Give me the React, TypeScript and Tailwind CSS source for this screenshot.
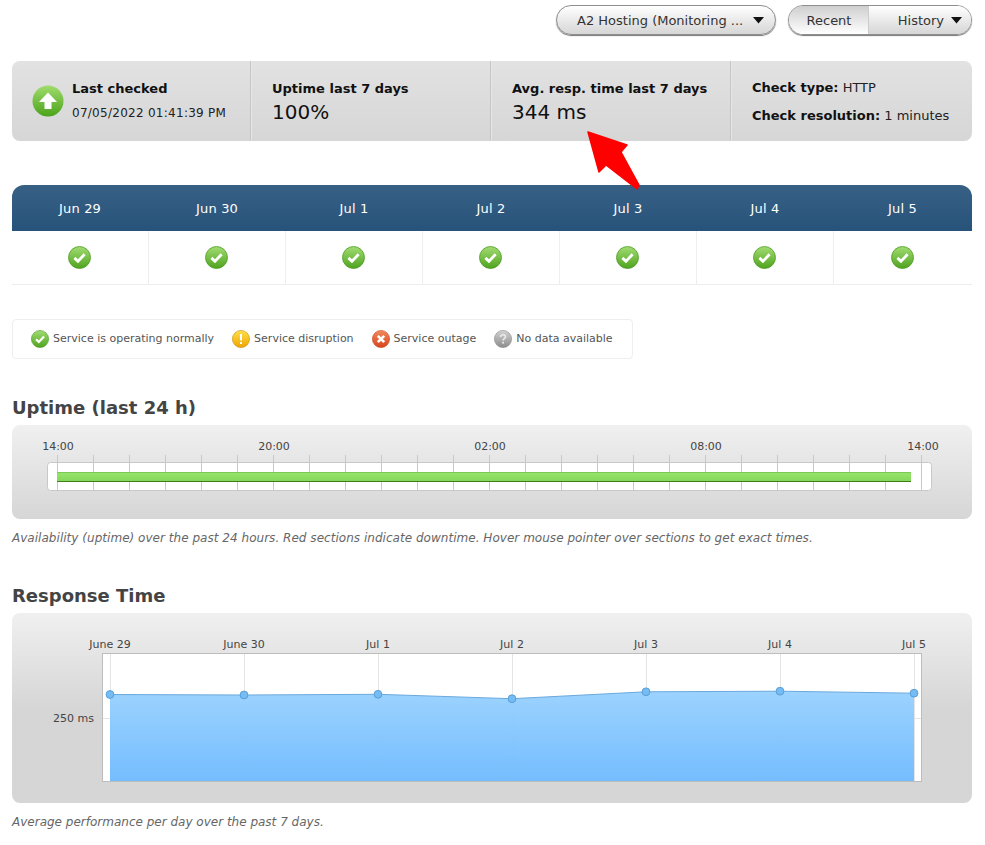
import React from "react";

type Status = "ok" | "warn" | "down" | "none";

const days = ["Jun 29", "Jun 30", "Jul 1", "Jul 2", "Jul 3", "Jul 4", "Jul 5"];

const colors: Record<Status, [string, string, string]> = {
  ok: ["#a2dc72", "#4fa31f", "#4b9a22"],
  warn: ["#ffe04a", "#eda500", "#c98d0a"],
  down: ["#f28a5c", "#d8431c", "#c2451f"],
  none: ["#d2d2d2", "#8c8c8c", "#8a8a8a"],
};

const StatusIcon = ({ kind, size }: { kind: Status; size: number }) => {
  const [top, bottom, edge] = colors[kind];
  const id = "grad-" + kind + size;
  return (
    <svg width={size} height={size} viewBox="0 0 18 18" className="shrink-0">
      <defs>
        <linearGradient id={id} x1="0" y1="0" x2="0" y2="1">
          <stop offset="0" stopColor={top} />
          <stop offset="1" stopColor={bottom} />
        </linearGradient>
      </defs>
      <circle cx="9" cy="9" r="8.6" fill={"url(#" + id + ")"} stroke={edge} strokeWidth="0.6" />
      {kind === "ok" && (
        <path d="M5 9.3l2.8 2.6L13 6.5" fill="none" stroke="#fff" strokeWidth="2.2" />
      )}
      {kind === "warn" && (
        <>
          <rect x="8" y="4" width="2" height="6.5" fill="#fff" />
          <rect x="8" y="12" width="2" height="2" fill="#fff" />
        </>
      )}
      {kind === "down" && (
        <path d="M5.8 5.8l6.4 6.4M12.2 5.8l-6.4 6.4" fill="none" stroke="#fff" strokeWidth="2.6" />
      )}
      {kind === "none" && (
        <>
          <path d="M6.6 7c0-3 4.9-3 4.9-.2 0 1.8-2.4 1.9-2.4 3.7" fill="none" stroke="#e8e8e8" strokeWidth="1.7" />
          <rect x="8.2" y="11.8" width="1.8" height="1.8" fill="#e8e8e8" />
        </>
      )}
    </svg>
  );
};

const UpIcon = () => (
  <svg width="32" height="32" viewBox="0 0 32 32" className="shrink-0">
    <defs>
      <linearGradient id="up-grad" x1="0" y1="0" x2="0" y2="1">
        <stop offset="0" stopColor="#a0dc6c" />
        <stop offset="1" stopColor="#4ba31a" />
      </linearGradient>
    </defs>
    <circle cx="16" cy="16" r="15.5" fill="url(#up-grad)" />
    <path d="M16 7.5L25 17h-5.5v7h-7v-7H7z" fill="#fff" />
  </svg>
);

const Caret = () => (
  <svg width="11" height="7" viewBox="0 0 11 7" className="shrink-0">
    <path d="M0 0h11L5.5 6.5z" fill="#111" />
  </svg>
);

const Stat = ({ label, value }: { label: string; value: string }) => (
  <div className="w-[240px] pl-[21px] pt-[19px] border-r border-[#c6c6c6] shadow-[1px_0_0_#e6e6e6]">
    <div className="text-[13px] font-bold leading-[18px] text-[#111]">{label}</div>
    <div className="text-[20px] leading-[29px] text-[#111]">{value}</div>
  </div>
);

const UptimeChart = () => {
  const ticks = Array.from({ length: 25 }, (_, i) => 45 + i * 36);
  const labels = [
    { x: 46, t: "14:00" },
    { x: 262, t: "20:00" },
    { x: 478, t: "02:00" },
    { x: 694, t: "08:00" },
    { x: 911, t: "14:00" },
  ];
  return (
    <svg width="960" height="94" className="block">
      <defs>
        <linearGradient id="bar-grad" x1="0" y1="0" x2="0" y2="1">
          <stop offset="0" stopColor="#97e56c" />
          <stop offset="1" stopColor="#82d659" />
        </linearGradient>
      </defs>
      {labels.map((l, i) => (
        <text key={i} x={l.x} y="25" textAnchor="middle" fontSize="11" fill="#444">
          {l.t}
        </text>
      ))}
      <rect x="35.5" y="37.5" width="884" height="28" rx="3" fill="#fff" stroke="#c8c8c8" />
      {ticks.map((x) => (
        <line key={x} x1={x + 0.5} x2={x + 0.5} y1="30" y2="65" stroke="#c8c8c8" />
      ))}
      <rect x="45" y="47" width="854" height="10" fill="url(#bar-grad)" />
      <rect x="45" y="47" width="854" height="1" fill="#7cc95a" />
      <rect x="45" y="56" width="854" height="1" fill="#3f7f17" />
    </svg>
  );
};

const ResponseChart = () => {
  const xs = [98, 232, 366, 500, 634, 768, 902];
  const ys = [81.5, 82, 81.3, 85.7, 78.8, 78.2, 80.2];
  const labels = ["June 29", "June 30", "Jul 1", "Jul 2", "Jul 3", "Jul 4", "Jul 5"];
  const line = xs.map((x, i) => x + "," + ys[i]).join(" ");
  return (
    <svg width="960" height="190" className="block">
      <defs>
        <linearGradient id="area-grad" x1="0" y1="0" x2="0" y2="1">
          <stop offset="0" stopColor="#99d1fe" />
          <stop offset="1" stopColor="#70bbfe" />
        </linearGradient>
      </defs>
      {labels.map((l, i) => (
        <text key={l} x={xs[i]} y="35" textAnchor="middle" fontSize="11" fill="#444">
          {l}
        </text>
      ))}
      <text x="82" y="109" textAnchor="end" fontSize="11" fill="#444">
        250 ms
      </text>
      <rect x="90.5" y="40.5" width="819" height="128" fill="#fff" stroke="#bdbdbd" />
      {xs.map((x) => (
        <line key={x} x1={x + 0.5} x2={x + 0.5} y1="41" y2="168" stroke="#e4e4e4" />
      ))}
      <line x1="91" x2="909" y1="105.5" y2="105.5" stroke="#e4e4e4" />
      <polygon points={"98,168 " + line + " 902,168"} fill="url(#area-grad)" fillOpacity="0.97" />
      <polyline points={line} fill="none" stroke="#6aa9dc" strokeWidth="1" />
      {xs.map((x, i) => (
        <circle key={x} cx={x} cy={ys[i]} r="3.9" fill="#74bcf5" stroke="#5a9fd6" />
      ))}
    </svg>
  );
};

const legend: { kind: Status; text: string }[] = [
  { kind: "ok", text: "Service is operating normally" },
  { kind: "warn", text: "Service disruption" },
  { kind: "down", text: "Service outage" },
  { kind: "none", text: "No data available" },
];

export default function App() {
  return (
    <div className="relative w-[985px] h-[845px] overflow-hidden bg-white pl-[12px] pt-[5px] font-['DejaVu_Sans',Verdana,sans-serif] text-[#333]">
      <div className="flex w-[960px] justify-end gap-[12px]">
        <button className="flex h-[30px] w-[220px] items-center justify-between rounded-[15px] border border-[#8e8e8e] bg-gradient-to-b from-white to-[#d6d6d6] pl-[20px] pr-[11px] pt-[1px] text-[13px] text-[#333] shadow-[0_1px_1px_#777]">
          <span>A2 Hosting (Monitoring ...</span>
          <Caret />
        </button>
        <div className="flex h-[30px] w-[184px] rounded-[15px] border border-[#8e8e8e] text-[13px] text-[#333] shadow-[0_1px_1px_#777]">
          <div className="flex w-[80px] items-center justify-center rounded-l-[15px] border-r border-[#ccc] bg-gradient-to-b from-[#cfcfcf] to-white pl-[1px] pt-[1px]">
            Recent
          </div>
          <div className="flex flex-1 items-center justify-end gap-[7px] rounded-r-[15px] bg-gradient-to-b from-white to-[#d6d6d6] pr-[9px] pt-[1px]">
            <span>History</span>
            <Caret />
          </div>
        </div>
      </div>

      <div className="mt-[26px] flex h-[80px] w-[960px] rounded-[8px] bg-gradient-to-b from-[#e2e2e2] to-[#d6d6d6]">
        <div className="flex w-[239px] items-start border-r border-[#c6c6c6] pl-[20px] pt-[19px] shadow-[1px_0_0_#e6e6e6]">
          <div className="mt-[5px]">
            <UpIcon />
          </div>
          <div className="ml-[8px]">
            <div className="text-[13px] font-bold leading-[18px] text-[#111]">Last checked</div>
            <div className="mt-[6px] text-[12px] leading-[18px] tracking-[0.27px] text-[#222]">07/05/2022 01:41:39 PM</div>
          </div>
        </div>
        <Stat label="Uptime last 7 days" value="100%" />
        <Stat label="Avg. resp. time last 7 days" value="344 ms" />
        <div className="pl-[21px] pt-[18px] text-[13px] text-[#222]">
          <div className="leading-[18px]">
            <b className="text-[#111]">Check type:</b> HTTP
          </div>
          <div className="mt-[10px] leading-[18px]">
            <b className="text-[#111]">Check resolution:</b> 1 minutes
          </div>
        </div>
      </div>

      <div className="mt-[44px] w-[960px]">
        <div className="grid h-[46px] grid-cols-[repeat(6,137px)_1fr] rounded-t-[12px] bg-gradient-to-b from-[#386085] to-[#27537a]">
          {days.map((d) => (
            <div key={d} className="flex items-center justify-center pr-[1px] pt-[2px] text-[13px] tracking-[0.2px] text-white">
              {d}
            </div>
          ))}
        </div>
        <div className="grid h-[54px] grid-cols-[repeat(6,137px)_1fr] border-b border-[#eee]">
          {days.map((d, i) => (
            <div key={d} className={"flex items-center justify-center pb-[1px] pr-[1px] " + (i < 6 ? "border-r border-[#eee]" : "")}>
              <StatusIcon kind="ok" size={23} />
            </div>
          ))}
        </div>
      </div>

      <div className="mt-[34px] flex h-[40px] w-[621px] items-center gap-[18px] whitespace-nowrap rounded-[4px] border border-[#eee] pl-[18px] text-[11px] text-[#555]">
        {legend.map((l) => (
          <div key={l.kind} className="flex items-center gap-[4px]">
            <StatusIcon kind={l.kind} size={18} />
            <span className="pt-[1px]">{l.text}</span>
          </div>
        ))}
      </div>

      <h2 className="mt-[38px] text-[18px] font-bold leading-[22px] text-[#444]">Uptime (last 24 h)</h2>
      <div className="mt-[6px] h-[94px] w-[960px] rounded-[8px] bg-gradient-to-b from-[#f0f0f0] to-[#d6d6d6]">
        <UptimeChart />
      </div>
      <p className="mt-[10px] text-[12px] italic leading-[18px] tracking-[0.03px] text-[#666]">
        Availability (uptime) over the past 24 hours. Red sections indicate downtime. Hover mouse pointer over sections to get exact times.
      </p>

      <h2 className="mt-[38px] text-[18px] font-bold leading-[22px] text-[#444]">Response Time</h2>
      <div className="mt-[6px] h-[190px] w-[960px] rounded-[8px] bg-gradient-to-b from-[#f0f0f0] via-[#d6d6d6] via-50% to-[#d6d6d6]">
        <ResponseChart />
      </div>
      <p className="mt-[10px] text-[12px] italic leading-[18px] text-[#666]">
        Average performance per day over the past 7 days.
      </p>

      <svg width="985" height="200" className="absolute left-0 top-0 pointer-events-none">
        <path
          d="M588 132 L627 145 L621 152 L639 185 L637 189 L606 165 L599 172 Z"
          fill="#ff0000"
          stroke="#ff0000"
          strokeWidth="1.5"
          strokeLinejoin="round"
        />
      </svg>
    </div>
  );
}
